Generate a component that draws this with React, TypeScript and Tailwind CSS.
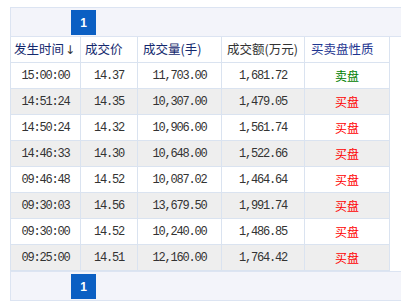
import React from 'react';

interface Trade {
  time: string;
  price: string;
  volume: string;
  amount: string;
  side: 'buy' | 'sell';
}

const trades: Trade[] = [
  { time: '15:00:00', price: '14.37', volume: '11,703.00', amount: '1,681.72', side: 'sell' },
  { time: '14:51:24', price: '14.35', volume: '10,307.00', amount: '1,479.05', side: 'buy' },
  { time: '14:50:24', price: '14.32', volume: '10,906.00', amount: '1,561.74', side: 'buy' },
  { time: '14:46:33', price: '14.30', volume: '10,648.00', amount: '1,522.66', side: 'buy' },
  { time: '09:46:48', price: '14.52', volume: '10,087.02', amount: '1,464.64', side: 'buy' },
  { time: '09:30:03', price: '14.56', volume: '13,679.50', amount: '1,991.74', side: 'buy' },
  { time: '09:30:00', price: '14.52', volume: '10,240.00', amount: '1,486.85', side: 'buy' },
  { time: '09:25:00', price: '14.51', volume: '12,160.00', amount: '1,764.42', side: 'buy' },
];

const widths = ['w-[70px]', 'w-[57px]', 'w-[84px]', 'w-[83px]', 'w-[85px]'];

const cjk = "font-['Noto_Sans_CJK_SC','Noto_Sans',sans-serif]";
const mono = "font-['Liberation_Mono','DejaVu_Sans_Mono',monospace]";

function Pager() {
  return (
    <div className="h-[30px] border border-[#dce4f2] bg-[#f3f4fa] flex items-start pt-[2px] pl-[60px]">
      <button className="w-[25px] h-[25px] bg-[#0b5fc3] text-white text-[12px] font-bold font-['Liberation_Sans',sans-serif] flex items-center justify-center">
        1
      </button>
    </div>
  );
}

export default function App() {
  return (
    <div className="w-[401px] h-[306px] overflow-hidden bg-white pt-[7px] pl-[10px]">
      <div className="w-[420px]">
        <Pager />

        <div className="w-[380px] border-l border-[#dae3f0]">
          <div className={`flex h-[26px] border-b border-[#dae3f0] text-[12.5px] ${cjk}`}>
            <div className={`${widths[0]} border-r border-[#dae3f0] pl-[3px] flex items-center text-[#14296e]`}>
              发生时间<span className="text-[#333] ml-[1px] font-['DejaVu_Sans',sans-serif] text-[12px]">↓</span>
            </div>
            <div className={`${widths[1]} border-r border-[#dae3f0] pl-[4px] flex items-center text-[#14296e]`}>成交价</div>
            <div className={`${widths[2]} border-r border-[#dae3f0] pl-[5px] flex items-center text-[#14296e]`}>成交量(手)</div>
            <div className={`${widths[3]} border-r border-[#dae3f0] pl-[5px] flex items-center text-[#333]`}>成交额(万元)</div>
            <div className={`${widths[4]} border-r border-[#dae3f0] pl-[6px] flex items-center text-[#1d3591]`}>买卖盘性质</div>
          </div>

          {trades.map((t, i) => (
            <div
              key={t.time + i}
              className={`flex h-[26px] border-b border-[#dae3f0] text-[12px] text-[#333] ${i % 2 === 1 ? 'bg-[#eeeeee]' : 'bg-white'}`}
            >
              {[t.time, t.price, t.volume, t.amount].map((v, j) => (
                <div
                  key={j}
                  className={`${widths[j]} border-r border-[#dae3f0] flex items-center justify-center ${mono} tracking-[-1.2px]`}
                >
                  {v}
                </div>
              ))}
              <div
                className={`${widths[4]} border-r border-[#dae3f0] flex items-center justify-center ${cjk} ${t.side === 'sell' ? 'text-[#008000]' : 'text-[#ff0000]'}`}
              >
                {t.side === 'sell' ? '卖盘' : '买盘'}
              </div>
            </div>
          ))}
        </div>

        <Pager />
      </div>
    </div>
  );
}
